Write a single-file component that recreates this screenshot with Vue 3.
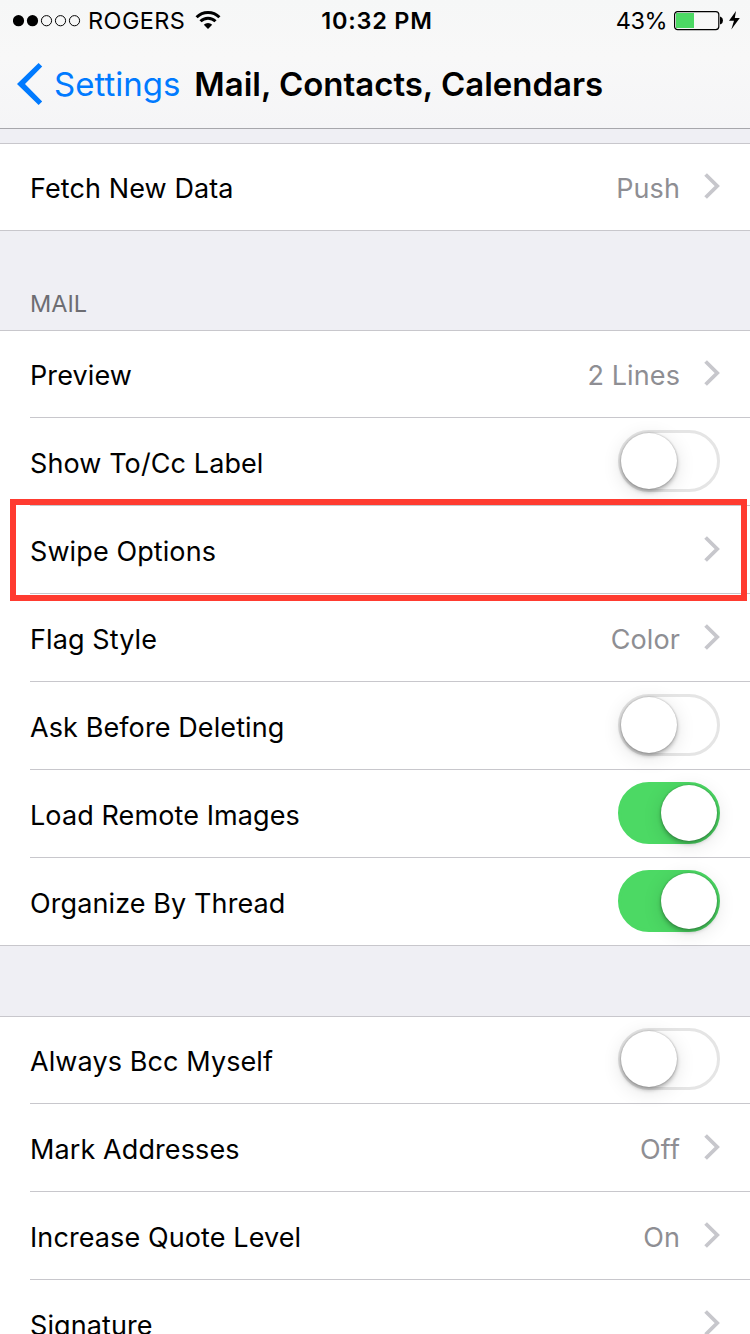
<script setup>
const groups = [
  { name: 'fetch', rows: [{ label: 'Fetch New Data', value: 'Push' }] },
  {
    name: 'mail',
    title: 'MAIL',
    rows: [
      { label: 'Preview', value: '2 Lines' },
      { label: 'Show To/Cc Label', toggle: true, on: false },
      { label: 'Swipe Options', value: '', marked: true },
      { label: 'Flag Style', value: 'Color' },
      { label: 'Ask Before Deleting', toggle: true, on: false },
      { label: 'Load Remote Images', toggle: true, on: true },
      { label: 'Organize By Thread', toggle: true, on: true },
    ],
  },
  {
    name: 'compose',
    rows: [
      { label: 'Always Bcc Myself', toggle: true, on: false },
      { label: 'Mark Addresses', value: 'Off' },
      { label: 'Increase Quote Level', value: 'On' },
      { label: 'Signature', value: '' },
    ],
  },
]
</script>

<template>
  <div class="screen">
    <header class="top">
      <div class="status">
        <div class="carrier">
          <svg class="dots" width="68" height="12" viewBox="0 0 68 12">
            <circle cx="5.5" cy="5.7" r="5.6" />
            <circle cx="19.5" cy="5.7" r="5.6" />
            <circle class="empty" cx="33.5" cy="5.7" r="5.1" />
            <circle class="empty" cx="47.5" cy="5.7" r="5.1" />
            <circle class="empty" cx="61.5" cy="5.7" r="5.1" />
          </svg>
          <span class="network">ROGERS</span>
          <svg class="wifi" width="26" height="18" viewBox="0 0 26 18">
            <path class="arc" d="M1.6 6.2a16.2 16.2 0 0 1 22.8 0" />
            <path class="arc" d="M5.5 10.3a10.6 10.6 0 0 1 15 0" />
            <path d="M13 18L8.8 13.7a6 6 0 0 1 8.4 0z" />
          </svg>
        </div>
        <span class="time">10:32 PM</span>
        <div class="power">
          <span class="percent">43%</span>
          <svg class="battery" width="67" height="20" viewBox="0 0 67 20">
            <rect class="shell" x=".6" y=".6" width="44.2" height="18" rx="3" />
            <rect class="charge" x="2" y="2" width="18" height="15" />
            <path d="M46 5.8h.8q2.2 1 2.2 3.7t-2.2 3.7H46z" />
            <path d="M62 0L55 9.8h5L57.3 18.6 65.8 7h-5z" />
          </svg>
        </div>
      </div>
      <nav class="nav">
        <svg class="back" width="26" height="42" viewBox="0 0 26 42">
          <path d="M21.6 0L25.2 3.6 8 21 25.2 38.4 21.6 42 0 21z" />
        </svg>
        <span class="back-label">Settings</span>
        <h1 class="title">Mail, Contacts, Calendars</h1>
      </nav>
    </header>

    <main class="list">
      <section v-for="g in groups" :key="g.name" class="section" :class="g.name">
        <h2 v-if="g.title" class="heading">{{ g.title }}</h2>
        <div class="group">
          <div v-for="r in g.rows" :key="r.label" class="row">
            <span class="label">{{ r.label }}</span>
            <span v-if="r.toggle" class="toggle" :class="{ on: r.on }"><span class="knob"></span></span>
            <template v-else>
              <span class="value">{{ r.value }}</span>
              <svg class="chevron" width="16" height="26" viewBox="0 0 16 26">
                <path d="M1.6 1.5L13.2 13 1.6 24.5" />
              </svg>
            </template>
            <span v-if="r.marked" class="marker"></span>
          </div>
        </div>
      </section>
    </main>
  </div>
</template>

<style>
body {
  margin: 0;
  overflow: hidden;
}
</style>

<style scoped>
.screen {
  width: 750px;
  height: 1334px;
  overflow: hidden;
  background: #efeff4;
  color: #000;
  font-family: Inter, "Liberation Sans", sans-serif;
}
.top {
  box-sizing: border-box;
  height: 129px;
  background: linear-gradient(#f6f7f7, #f8f8f8 45%, #f5f5f7);
  border-bottom: 1px solid #a7a7ac;
}
.status {
  display: grid;
  grid-template-columns: 1fr auto 1fr;
  align-items: center;
  height: 42px;
  padding: 0 9px 0 13px;
  font-size: 23.5px;
  line-height: 42px;
}
.carrier,
.power {
  display: flex;
  align-items: center;
}
.power {
  justify-content: flex-end;
}
.dots .empty {
  fill: none;
  stroke: #000;
  stroke-width: 1;
}
.network {
  margin-left: 7px;
  letter-spacing: 0.4px;
}
.wifi {
  margin: 0 0 2px 10px;
}
.arc {
  fill: none;
  stroke: #000;
  stroke-width: 3;
}
.time {
  font-weight: 560;
  letter-spacing: 0.75px;
}
.percent {
  margin-right: 7px;
  letter-spacing: -0.5px;
}
.shell {
  fill: none;
  stroke: #000;
  stroke-width: 1.2;
}
.charge {
  fill: #4cd964;
}
.nav {
  display: flex;
  align-items: center;
  height: 84px;
  padding-left: 17px;
}
.back {
  fill: #007aff;
}
.back-label {
  margin-left: 11px;
  color: #007aff;
  font-size: 33px;
}
.title {
  margin: 0 0 0 14px;
  font-size: 33px;
  font-weight: 600;
  letter-spacing: -0.03px;
  white-space: nowrap;
}
.section {
  padding-top: 14px;
}
.section.mail {
  padding-top: 55px;
}
.section.compose {
  padding-top: 70px;
}
.heading {
  height: 44px;
  margin: 0 0 0 30px;
  color: #6d6d72;
  font-size: 23.5px;
  font-weight: 400;
  line-height: 36px;
}
.group {
  background: #fff;
  border-top: 1px solid #c8c7cc;
  border-bottom: 1px solid #c8c7cc;
}
.row {
  position: relative;
  display: flex;
  align-items: flex-end;
  box-sizing: border-box;
  height: 88px;
  margin-left: 30px;
  padding: 0 30px 13px 0;
  border-bottom: 1px solid #c8c7cc;
}
.row:first-child {
  height: 87px;
}
.row:last-child {
  margin-bottom: -1px;
  border-bottom-color: transparent;
}
.label,
.value {
  font-size: 27px;
  line-height: 68px;
  height: 62px;
  letter-spacing: 0.1px;
}
.label {
  flex: 1;
}
.value {
  color: #8e8e93;
}
.chevron {
  margin: 0 0 18px 24px;
  fill: none;
  stroke: #c7c7cc;
  stroke-width: 3.8;
}
.toggle {
  box-sizing: border-box;
  width: 102px;
  height: 62px;
  border: 3px solid #e5e5e5;
  border-radius: 31px;
}
.knob {
  display: block;
  width: 56px;
  height: 56px;
  border-radius: 50%;
  background: #fff;
  box-shadow: 0 3px 4px rgba(0, 0, 0, 0.26), 0 0 2px rgba(0, 0, 0, 0.3), 0 4px 20px rgba(0, 0, 0, 0.12);
}
.toggle.on {
  background: #4cd964;
  border-color: #4cd964;
}
.toggle.on .knob {
  margin-left: 40px;
}
/* Frame drawn around the highlighted row */
.marker {
  position: absolute;
  z-index: 1;
  top: -7px;
  right: 3px;
  bottom: -8px;
  left: -20px;
  border: 6px solid #ff3b30;
}
</style>
